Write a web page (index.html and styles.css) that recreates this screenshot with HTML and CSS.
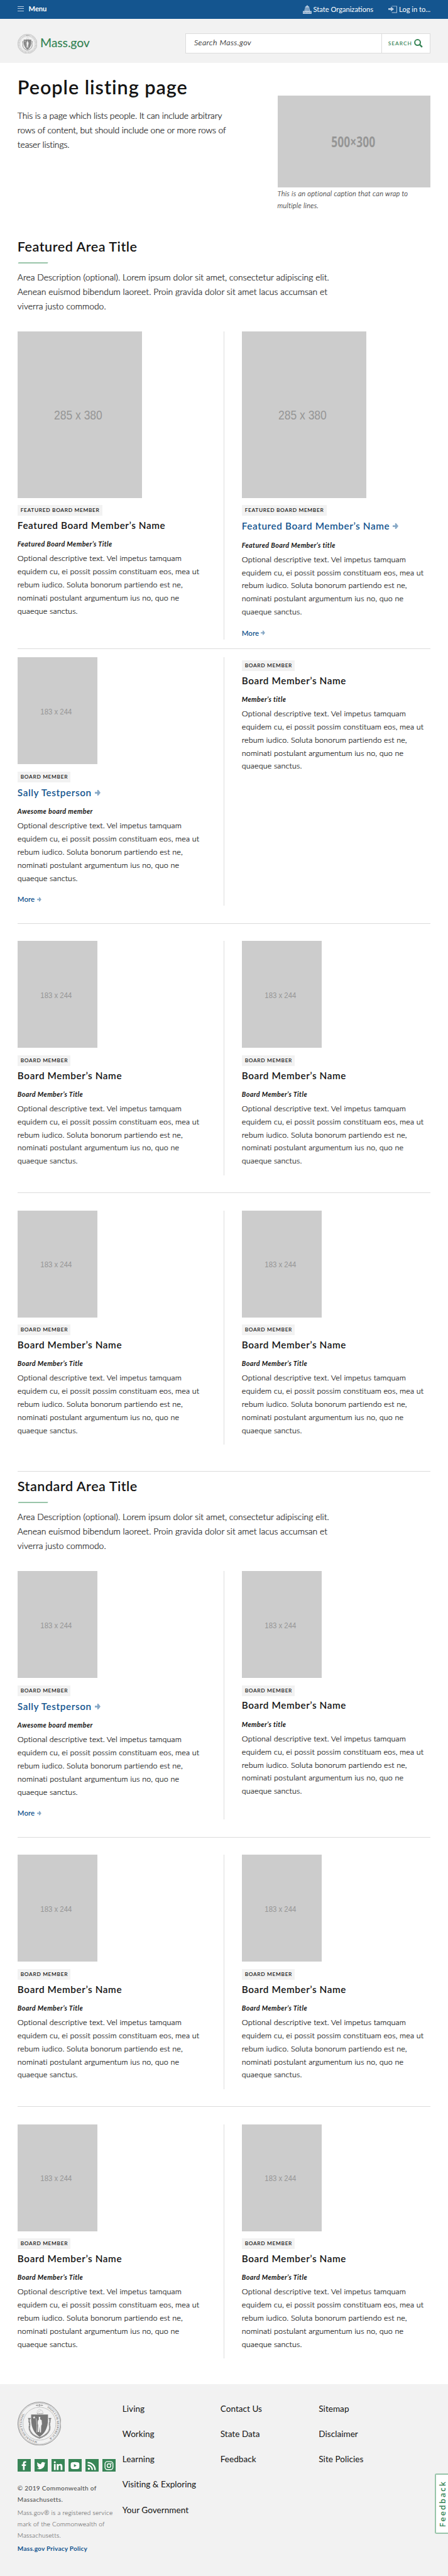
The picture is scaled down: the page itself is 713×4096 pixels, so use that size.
FILE: index.html
```html
<!DOCTYPE html>
<html lang="en">
<head>
<meta charset="utf-8">
<title>People listing page | Mass.gov</title>
<link rel="stylesheet" href="styles.css">
</head>
<body>
<svg class="sprite" width="0" height="0" aria-hidden="true">
  <symbol id="arrow" viewBox="0 0 13 16"><path d="M0 6h5.500V1.500h2.300L13 8l-5.200 6.500H5.500V10H0z"/></symbol>
  <symbol id="seal" viewBox="0 0 100 100">
    <g fill="none" stroke="currentColor">
      <circle cx="50" cy="50" r="49.300" stroke-width="1.200"/>
      <circle cx="50" cy="50" r="47" stroke-width=".6"/>
      <circle cx="50" cy="50" r="37.500" stroke-width="1" stroke-dasharray="1 .7"/>
    </g>
    <path fill="currentColor" d="M31 29h38.500v12c0 19-8 32-19.200 39C39 73 31 60 31 41z"/>
    <path fill="none" stroke="currentColor" stroke-width="3.400" stroke-dasharray="1.800 .5" d="M26.500 38v8c3 5-1.500 12 1.500 19 3 8 11 14 22 17.500C61 79 69 73 72.500 65c3-7-1.500-14 1.500-19v-8"/>
    <path fill="none" stroke="currentColor" stroke-width="2" d="M24 38h6M71 38h6"/>
    <path fill="none" stroke="currentColor" stroke-width=".7" opacity=".6" d="M42 27c2-4 8-3 11-8M44 22l6-5 6 3 3 7"/>
    <path stroke="currentColor" stroke-width="1.600" stroke-dasharray="3 1.500" d="M45 27h14"/>
    <path fill="currentColor" d="M41 8l5-1.500v3zM59 8l-5-1.500v3z"/>
    <circle cx="50" cy="8" r="1.800" fill="none" stroke="currentColor" stroke-width="1.400"/>
    <path fill="#f2f2f2" d="M37.800 32.500l.9 2.200 2.300.1-1.800 1.500.6 2.300-2-1.300-2 1.300.6-2.300-1.800-1.500 2.300-.1zM48.500 34l3.500 1-.5 5 3.500 2 .8 9-1.800 4-.5 15h-2.500l-.8-13-1.200 12h-3l1-15-1-5 .5-6 2-2z"/>
    <path fill="none" stroke="#f2f2f2" stroke-width=".9" d="M42.500 38c1.800 11 2 21 1.200 32"/>
  </symbol>
</svg>

<div class="page">
  <nav class="utility">
    <a class="menu"><span class="bars"></span>Menu</a>
    <div class="utility-links">
      <a><svg class="ico20" viewBox="0 0 20 20"><path d="M9.300 0h1.400v1.700c2.600.6 4.300 2.500 4.600 4.900H4.700C5 4.200 6.700 2.300 9.300 1.700zM4.500 7.600h11v1h-11z"/><path fill-rule="evenodd" d="M4 9.400h12v4.400h4V20H0v-6.200h4zm2 1.500v2h1.500v-2zm3.200 0v2h1.600v-2zm3.200 0v2h1.600v-2zM2 16v2h1.300v-2zm3.500 0v2h1.300v-2zm3.800 0v2h1.300v-2zm3.700 0v2h1.300v-2zm3.700 0v2H18v-2z"/></svg><span>State Organizations</span></a>
      <a><svg class="ico20" viewBox="0 0 20 20"><path d="M0 7h6V3.500L13 9l-7 5.500V11H0z" transform="translate(0 .2)"/><path d="M8 2h12v16H8v-1.300h10.600V3.300H8z"/></svg><span>Log in to...</span></a>
    </div>
  </nav>

  <header class="masthead">
    <a class="logo"><svg class="seal-sm" viewBox="0 0 100 100"><use href="#seal"/><circle cx="50" cy="50" r="42.300" fill="none" stroke="currentColor" stroke-width="4.500" stroke-dasharray="1.600 2.600" opacity=".7"/></svg><span>Mass.gov</span></a>
    <div class="search"><span class="search-field">Search Mass.gov</span><span class="search-btn">SEARCH<svg viewBox="0 0 20 20"><circle cx="8" cy="8" r="6.400" fill="none" stroke="currentColor" stroke-width="2.900"/><path stroke="currentColor" stroke-width="3.600" d="M12.500 12.500l6 6"/></svg></span></div>
  </header>

  <main>
    <section class="hero">
      <div class="hero-text">
        <h1>People listing page</h1>
        <p>This is a page which lists people. It can include arbitrary<br>rows of content, but should include one or more rows of<br>teaser listings.</p>
      </div>
      <figure><div class="ph ph-hero"><span>500×300</span></div><figcaption>This is an optional caption that can wrap to<br>multiple lines.</figcaption></figure>
    </section>

    <section class="area area-first">
      <h2>Featured Area Title</h2>
      <p class="desc">Area Description (optional). Lorem ipsum dolor sit amet, consectetur adipiscing elit.<br>Aenean euismod bibendum laoreet. Proin gravida dolor sit amet lacus accumsan et<br>viverra justo commodo.</p>
      <div class="row">
        <article><div class="ph ph-lg"><span>285 x 380</span></div><div class="tag">FEATURED BOARD MEMBER</div><h3>Featured Board Member’s Name</h3><h4>Featured Board Member’s Title</h4>
          <p>Optional descriptive text. Vel impetus tamquam<br>equidem cu, ei possit possim constituam eos, mea ut<br>rebum iudico. Soluta bonorum partiendo est ne,<br>nominati postulant argumentum ius no, quo ne<br>quaeque sanctus.</p></article>
        <article><div class="ph ph-lg"><span>285 x 380</span></div><div class="tag">FEATURED BOARD MEMBER</div><h3 class="linked">Featured Board Member’s Name<svg><use href="#arrow"/></svg></h3><h4>Featured Board Member’s title</h4>
          <p>Optional descriptive text. Vel impetus tamquam<br>equidem cu, ei possit possim constituam eos, mea ut<br>rebum iudico. Soluta bonorum partiendo est ne,<br>nominati postulant argumentum ius no, quo ne<br>quaeque sanctus.</p><a class="more">More<svg><use href="#arrow"/></svg></a></article>
      </div>
      <hr class="tight">
      <div class="row">
        <article><div class="ph"><span>183 x 244</span></div><div class="tag">BOARD MEMBER</div><h3 class="linked">Sally Testperson<svg><use href="#arrow"/></svg></h3><h4>Awesome board member</h4>
          <p>Optional descriptive text. Vel impetus tamquam<br>equidem cu, ei possit possim constituam eos, mea ut<br>rebum iudico. Soluta bonorum partiendo est ne,<br>nominati postulant argumentum ius no, quo ne<br>quaeque sanctus.</p><a class="more">More<svg><use href="#arrow"/></svg></a></article>
        <article class="no-photo"><div class="tag">BOARD MEMBER</div><h3>Board Member’s Name</h3><h4>Member’s title</h4>
          <p>Optional descriptive text. Vel impetus tamquam<br>equidem cu, ei possit possim constituam eos, mea ut<br>rebum iudico. Soluta bonorum partiendo est ne,<br>nominati postulant argumentum ius no, quo ne<br>quaeque sanctus.</p></article>
      </div>
      <hr>
      <div class="row">
        <article><div class="ph"><span>183 x 244</span></div><div class="tag">BOARD MEMBER</div><h3>Board Member’s Name</h3><h4>Board Member’s Title</h4>
          <p>Optional descriptive text. Vel impetus tamquam<br>equidem cu, ei possit possim constituam eos, mea ut<br>rebum iudico. Soluta bonorum partiendo est ne,<br>nominati postulant argumentum ius no, quo ne<br>quaeque sanctus.</p></article>
        <article><div class="ph"><span>183 x 244</span></div><div class="tag">BOARD MEMBER</div><h3>Board Member’s Name</h3><h4>Board Member’s Title</h4>
          <p>Optional descriptive text. Vel impetus tamquam<br>equidem cu, ei possit possim constituam eos, mea ut<br>rebum iudico. Soluta bonorum partiendo est ne,<br>nominati postulant argumentum ius no, quo ne<br>quaeque sanctus.</p></article>
      </div>
      <hr>
      <div class="row">
        <article><div class="ph"><span>183 x 244</span></div><div class="tag">BOARD MEMBER</div><h3>Board Member’s Name</h3><h4>Board Member’s Title</h4>
          <p>Optional descriptive text. Vel impetus tamquam<br>equidem cu, ei possit possim constituam eos, mea ut<br>rebum iudico. Soluta bonorum partiendo est ne,<br>nominati postulant argumentum ius no, quo ne<br>quaeque sanctus.</p></article>
        <article><div class="ph"><span>183 x 244</span></div><div class="tag">BOARD MEMBER</div><h3>Board Member’s Name</h3><h4>Board Member’s Title</h4>
          <p>Optional descriptive text. Vel impetus tamquam<br>equidem cu, ei possit possim constituam eos, mea ut<br>rebum iudico. Soluta bonorum partiendo est ne,<br>nominati postulant argumentum ius no, quo ne<br>quaeque sanctus.</p></article>
      </div>
    </section>

    <section class="area area-next">
      <h2>Standard Area Title</h2>
      <p class="desc">Area Description (optional). Lorem ipsum dolor sit amet, consectetur adipiscing elit.<br>Aenean euismod bibendum laoreet. Proin gravida dolor sit amet lacus accumsan et<br>viverra justo commodo.</p>
      <div class="row">
        <article><div class="ph"><span>183 x 244</span></div><div class="tag">BOARD MEMBER</div><h3 class="linked">Sally Testperson<svg><use href="#arrow"/></svg></h3><h4>Awesome board member</h4>
          <p>Optional descriptive text. Vel impetus tamquam<br>equidem cu, ei possit possim constituam eos, mea ut<br>rebum iudico. Soluta bonorum partiendo est ne,<br>nominati postulant argumentum ius no, quo ne<br>quaeque sanctus.</p><a class="more">More<svg><use href="#arrow"/></svg></a></article>
        <article><div class="ph"><span>183 x 244</span></div><div class="tag">BOARD MEMBER</div><h3>Board Member’s Name</h3><h4>Member’s title</h4>
          <p>Optional descriptive text. Vel impetus tamquam<br>equidem cu, ei possit possim constituam eos, mea ut<br>rebum iudico. Soluta bonorum partiendo est ne,<br>nominati postulant argumentum ius no, quo ne<br>quaeque sanctus.</p></article>
      </div>
      <hr>
      <div class="row">
        <article><div class="ph"><span>183 x 244</span></div><div class="tag">BOARD MEMBER</div><h3>Board Member’s Name</h3><h4>Board Member’s Title</h4>
          <p>Optional descriptive text. Vel impetus tamquam<br>equidem cu, ei possit possim constituam eos, mea ut<br>rebum iudico. Soluta bonorum partiendo est ne,<br>nominati postulant argumentum ius no, quo ne<br>quaeque sanctus.</p></article>
        <article><div class="ph"><span>183 x 244</span></div><div class="tag">BOARD MEMBER</div><h3>Board Member’s Name</h3><h4>Board Member’s Title</h4>
          <p>Optional descriptive text. Vel impetus tamquam<br>equidem cu, ei possit possim constituam eos, mea ut<br>rebum iudico. Soluta bonorum partiendo est ne,<br>nominati postulant argumentum ius no, quo ne<br>quaeque sanctus.</p></article>
      </div>
      <hr>
      <div class="row">
        <article><div class="ph"><span>183 x 244</span></div><div class="tag">BOARD MEMBER</div><h3>Board Member’s Name</h3><h4>Board Member’s Title</h4>
          <p>Optional descriptive text. Vel impetus tamquam<br>equidem cu, ei possit possim constituam eos, mea ut<br>rebum iudico. Soluta bonorum partiendo est ne,<br>nominati postulant argumentum ius no, quo ne<br>quaeque sanctus.</p></article>
        <article><div class="ph"><span>183 x 244</span></div><div class="tag">BOARD MEMBER</div><h3>Board Member’s Name</h3><h4>Board Member’s Title</h4>
          <p>Optional descriptive text. Vel impetus tamquam<br>equidem cu, ei possit possim constituam eos, mea ut<br>rebum iudico. Soluta bonorum partiendo est ne,<br>nominati postulant argumentum ius no, quo ne<br>quaeque sanctus.</p></article>
      </div>
    </section>
  </main>

  <footer>
    <div class="about">
      <svg class="seal-lg" viewBox="0 0 100 100"><use href="#seal"/><path id="ring" fill="none" d="M50 90.300A40.300 40.300 0 1 1 50.100 90.300"/><text class="seal-text" fill="currentColor"><textPath href="#ring" startOffset="5">MASSACHUSETTENSIS.</textPath></text><text class="seal-text" fill="currentColor"><textPath href="#ring" startOffset="144">SIGILLUM REIPUBLICÆ</textPath></text></svg>
      <div class="social">
        <a><svg viewBox="0 0 30 30"><path d="M12.300 25v-9.300H9.500v-3.600h2.800V9.400C12.300 6.500 14 5 16.700 5c1.200 0 2.200.1 2.800.2v3.300h-1.800c-1.400 0-1.600.7-1.600 1.700v1.900h3.300l-.5 3.600h-2.800V25z"/></svg></a>
        <a><svg viewBox="0 0 30 30"><path d="M25 8.800c-.7.300-1.500.5-2.300.6.800-.5 1.500-1.300 1.800-2.200-.8.400-1.700.8-2.600 1a4.100 4.100 0 0 0-7 3.700c-3.400-.2-6.400-1.800-8.500-4.300-1.100 1.900-.5 4.300 1.300 5.500-.7 0-1.300-.2-1.900-.5 0 2 1.400 3.700 3.300 4.100-.6.200-1.200.2-1.900.1.500 1.600 2 2.800 3.900 2.800A8.300 8.300 0 0 1 5 21.300 11.700 11.700 0 0 0 23 11c.8-.6 1.500-1.300 2-2.200z"/></svg></a>
        <a><svg viewBox="0 0 30 30"><path d="M5.500 11.500h4V25h-4zM7.500 5a2.300 2.300 0 1 1 0 4.600 2.300 2.300 0 0 1 0-4.600zM12 11.500h3.900v1.900c.6-1.100 2-2.200 4-2.200 4.200 0 5 2.600 5 6.200V25h-4.100v-6.800c0-1.600 0-3.500-2.200-3.500s-2.500 1.700-2.500 3.400V25H12z"/></svg></a>
        <a><svg viewBox="0 0 30 30"><path fill-rule="evenodd" d="M8 7.500q7-1 14 0 2.500.4 2.700 3 .6 4.500 0 9-.3 2.500-2.700 3-7 .9-14 0-2.500-.4-2.800-3-.5-4.500 0-9 .3-2.600 2.800-3zM12.500 11.500v7l6-3.500z"/></svg></a>
        <a><svg viewBox="0 0 30 30"><circle cx="7.800" cy="22.200" r="2.500"/><path fill="none" stroke="#fff" stroke-width="3.400" d="M5 14.200c6 0 10.600 4.600 10.600 10.600M5 8c9.500 0 17 7.500 17 17"/></svg></a>
        <a><svg viewBox="0 0 30 30"><g fill="none" stroke="#fff" stroke-width="2"><rect x="6" y="6" width="18" height="18" rx="5"/><circle cx="15" cy="15" r="4.200"/></g><circle cx="20" cy="10" r="1.300"/></svg></a>
      </div>
      <p class="copy">© 2019 Commonwealth of<br>Massachusetts.</p>
      <p class="mark">Mass.gov® is a registered service<br>mark of the Commonwealth of<br>Massachusetts.</p>
      <a class="privacy">Mass.gov Privacy Policy</a>
    </div>
    <div class="links"><a>Living</a><a>Working</a><a>Learning</a><a>Visiting &amp; Exploring</a><a>Your Government</a></div>
    <div class="links"><a>Contact Us</a><a>State Data</a><a>Feedback</a></div>
    <div class="links"><a>Sitemap</a><a>Disclaimer</a><a>Site Policies</a></div>
  </footer>
  <div class="feedback"><span>Feedback</span></div>
</div>
</body>
</html>
```
FILE: styles.css
```css
/* 1rem is ten design units */
html { font-size: 6.959px; }
* { box-sizing: border-box; margin: 0; padding: 0; }
body { background: #fff; color: #141414; font-family: Lato, "Open Sans", sans-serif; }
.sprite { position: absolute; }
.page { position: relative; height: 4096px; overflow: hidden; display: flex; flex-direction: column; }
h1, h2, h3, h4, p, a, figcaption, .tag { white-space: nowrap; }

.utility { height: 4.3rem; flex: none; padding: 0 4rem; background: #14558f; color: #fff; display: flex; justify-content: space-between; font-size: 1.6rem; line-height: 2rem; }
.utility a { display: flex; }
.menu { padding-top: 1rem; font-weight: 700; }
.bars { width: 1.5rem; height: 1.2rem; margin: .4rem 1.05rem 0 0; border: solid #b9cce0; border-width: .2rem 0; background: linear-gradient(#b9cce0, #b9cce0) 0 50% / 100% .2rem no-repeat; }
.utility-links { display: flex; gap: 3.5rem; padding-top: 1.15rem; }
.utility-links a { gap: .4rem; }
.ico20 { width: 2rem; height: 2rem; fill: #b9cce0; }

.masthead { height: 10rem; flex: none; padding: 3.3rem 4rem 0; background: #f2f2f2; display: flex; justify-content: space-between; }
.logo { display: flex; gap: .7rem; color: #388557; font-size: 2.8rem; font-weight: 500; line-height: 4.4rem; letter-spacing: -.008em; }
.seal-sm { width: 4.5rem; height: 4.5rem; margin-top: .1rem; color: #858585; }
.seal-text { font: 600 6.400px "Liberation Serif", serif; letter-spacing: .5px; }
.search { width: 56rem; height: 4.6rem; border: .2rem solid #dcdcdc; background: #fff; display: flex; }
.search-field { flex: 1; padding-left: 1.8rem; font-size: 1.8rem; font-style: italic; font-weight: 300; -webkit-text-stroke: .2px; line-height: 4.1rem; letter-spacing: .036em; }
.search-btn { width: 11.1rem; border-left: .2rem solid #dcdcdc; padding-left: 1.4rem; display: flex; align-items: center; gap: .4rem; color: #388557; font-size: 1.2rem; font-weight: 600; letter-spacing: .119em; }
.search-btn svg { width: 2rem; height: 2rem; }

main { padding: 0 4rem; }
.hero { height: 34.1rem; display: flex; justify-content: space-between; }
h1 { margin-top: 2.9rem; font-size: 4.4rem; font-weight: 600; line-height: 5.6rem; letter-spacing: .031em; }
.hero p { margin-top: 2.05rem; font-size: 2rem; font-weight: 300; line-height: 3.3rem; letter-spacing: -.007em; -webkit-text-stroke: .22px; }
.hero figure { width: 35rem; padding-top: 7.5rem; }
figcaption { font-size: 1.6rem; font-style: italic; font-weight: 300; line-height: 2.8rem; letter-spacing: .024em; color: #333; -webkit-text-stroke: .2px; }

.ph { width: 18.3rem; height: 24.4rem; background: #ccc; color: #969696; display: flex; align-items: center; justify-content: center; font-family: "Liberation Sans", sans-serif; font-size: 1.95rem; }
.ph span { transform: translate(-.35rem, .1rem) scaleX(.84); white-space: nowrap; }
.ph-lg { width: 28.5rem; height: 38rem; font-size: 3rem; }
.ph-hero { width: 35rem; height: 21rem; font: 700 3.3rem "Open Sans", sans-serif; }
.ph-hero span { transform: translate(-.1rem, 0) scaleX(.76); }

h2 { font-size: 3.1rem; font-weight: 600; line-height: 4rem; letter-spacing: .023em; }
h2::after { content: ""; display: block; width: 6.7rem; height: .35rem; margin: 1.45rem 0 0 .2rem; background: #99c5aa; transform: skewX(-25deg); }
.area-first { padding-top: 6.1rem; }
.area-next { margin-top: 6rem; border-top: 1px solid #dcdcdc; padding-top: 1.5rem; }
.desc { margin: 1.5rem 0 4.05rem; font-size: 2rem; font-weight: 300; line-height: 3.3rem; letter-spacing: .002em; -webkit-text-stroke: .22px; }

.row { display: grid; grid-template-columns: 47.15rem 1fr; }
.row article + article { border-left: 1px solid #dcdcdc; padding-left: 4rem; }
hr { border: 0; border-top: 1px solid #dcdcdc; margin: 3.95rem 0 3.97rem; }
hr.tight { margin: 2rem 0 1.95rem; }
.no-photo { padding-top: .7rem; }
.tag { width: fit-content; height: 2.4rem; padding: 0 .6rem 0 .7rem; background: #f2f2f2; font-size: 1.2rem; font-weight: 600; line-height: 2.4rem; letter-spacing: .08em; }
.ph + .tag { margin-top: 1.7rem; }
h3 { margin-top: .85rem; font-size: 2.2rem; font-weight: 600; line-height: 2.8rem; letter-spacing: .039em; }
h3 svg { width: 1.3rem; height: 1.6rem; margin-left: .7rem; fill: #89aac7; }
h3.linked { height: 2.8rem; margin-top: 1.05rem; color: #14558f; }
h4 { margin-top: 1.7rem; font-size: 1.55rem; font-style: italic; font-weight: 700; line-height: 2.2rem; letter-spacing: .037em; }
article p { margin: .82rem 0 1.65rem; font-size: 1.8rem; font-weight: 300; line-height: 3rem; letter-spacing: .011em; -webkit-text-stroke: .22px; }
.more { display: block; height: 3.05rem; color: #14558f; font-size: 1.65rem; font-weight: 600; line-height: 3.1rem; }
.more svg { width: 1rem; height: 1.2rem; margin-left: .5rem; fill: #89aac7; }

footer { flex: 1; margin-top: 5.9rem; background: #f2f2f2; padding: 4rem 4rem 0; display: grid; grid-template-columns: 24rem 22.4rem 22.5rem 1fr; }
.seal-lg { display: block; width: 10rem; height: 10rem; color: #777; }
.social { display: flex; gap: .9rem; margin: 3rem 0 2.4rem; }
.social a { width: 3rem; height: 3rem; background: #388557; }
.social svg { display: block; width: 3rem; height: 3rem; fill: #fff; }
.about { font-size: 1.45rem; line-height: 2.6rem; letter-spacing: .021em; }
.copy { color: #535353; font-weight: 500; letter-spacing: .031em; }
.mark { margin: .4rem 0; color: #777; font-weight: 300; -webkit-text-stroke: .15px; }
.privacy { color: #14558f; font-weight: 700; }
.links { display: flex; flex-direction: column; font-size: 1.95rem; line-height: 5.78rem; margin-top: -1.35rem; letter-spacing: .002em; }

.feedback { position: absolute; left: 99.4rem; top: 565.2rem; width: 3.4rem; height: 13.8rem; background: #fff; border: .3rem solid #99c5aa; border-right: 0; border-radius: .4rem 0 0 .4rem; display: flex; align-items: center; justify-content: center; color: #388557; }
.feedback span { writing-mode: vertical-rl; transform: rotate(180deg); font: 600 1.8rem/2rem "Open Sans", sans-serif; letter-spacing: .17em; }
```
